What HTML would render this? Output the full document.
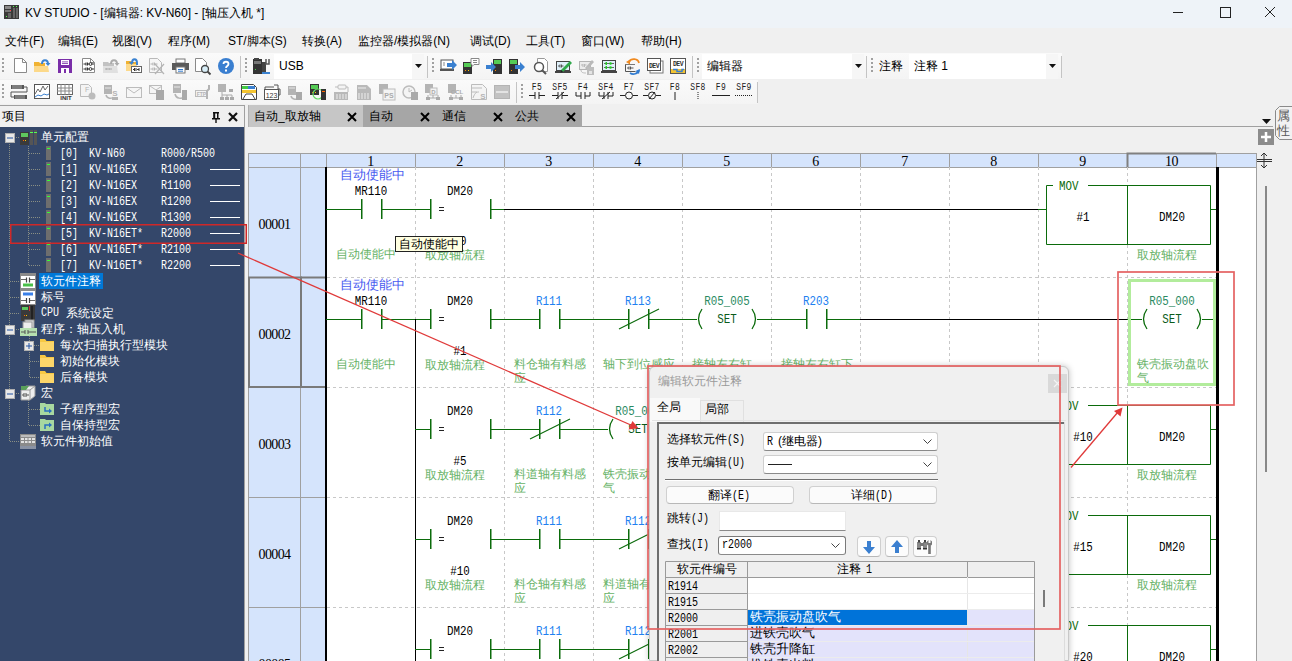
<!DOCTYPE html><html><head><meta charset="utf-8"><style>
html,body{margin:0;padding:0;}
body{width:1292px;height:661px;overflow:hidden;position:relative;background:#f0f0f0;font-family:"Liberation Sans",sans-serif;}
body div{position:absolute;white-space:pre;line-height:1;}
svg{position:absolute;overflow:visible;}
.tm{font-family:"Liberation Mono",monospace;font-size:10px;color:#fff;transform:scale(1,1.3);transform-origin:0 0;}
.lm{font-family:"Liberation Mono",monospace;font-size:10.83px;color:#000;transform:scale(1,1.25);transform-origin:0 0;}
.lc{font-family:"Liberation Sans",sans-serif;font-size:12px;}
.rn{font-family:"Liberation Serif",serif;font-size:14px;letter-spacing:-0.6px;color:#000;}
.dm{font-family:"Liberation Mono",monospace;font-size:10px;color:#000;transform:scale(1,1.3);transform-origin:0 0;}
</style></head><body>
<div style="left:0px;top:0px;width:1292px;height:28px;background:#eef3f8;"></div>
<svg style="left:4px;top:5px" width="16" height="15" viewBox="0 0 16 15">
<rect x="0" y="0" width="15" height="14" fill="#3a3a3a"/>
<rect x="1" y="1" width="6" height="3" fill="#8a8a8a"/><rect x="9" y="1" width="1" height="1" fill="#5f5"/><rect x="12" y="1" width="1" height="1" fill="#5f5"/>
<rect x="1" y="5" width="6" height="2" fill="#777"/><rect x="6" y="5" width="1" height="1" fill="#f44"/>
<rect x="9" y="3" width="2" height="10" fill="#666"/><rect x="12" y="3" width="2" height="10" fill="#666"/>
<rect x="2" y="11" width="1" height="1" fill="#5f5"/><rect x="4" y="8" width="3" height="5" fill="#666"/>
</svg>
<div style="left:25px;top:7px;font-size:12px;color:#000;font-family:'Liberation Sans', sans-serif;">KV STUDIO - [编辑器: KV-N60] - [轴压入机 *]</div>
<svg style="left:1165px;top:5px" width="120" height="16" viewBox="0 0 120 16">
<line x1="8" y1="7.5" x2="18" y2="7.5" stroke="#222" stroke-width="1"/>
<rect x="55.5" y="2.5" width="10" height="10" fill="none" stroke="#222" stroke-width="1"/>
<line x1="100" y1="2" x2="110" y2="12" stroke="#222" stroke-width="1"/><line x1="110" y1="2" x2="100" y2="12" stroke="#222" stroke-width="1"/>
</svg>
<div style="left:5px;top:35px;font-size:12px;color:#000;font-family:'Liberation Sans', sans-serif;">文件(F)</div>
<div style="left:58px;top:35px;font-size:12px;color:#000;font-family:'Liberation Sans', sans-serif;">编辑(E)</div>
<div style="left:112px;top:35px;font-size:12px;color:#000;font-family:'Liberation Sans', sans-serif;">视图(V)</div>
<div style="left:168px;top:35px;font-size:12px;color:#000;font-family:'Liberation Sans', sans-serif;">程序(M)</div>
<div style="left:228px;top:35px;font-size:12px;color:#000;font-family:'Liberation Sans', sans-serif;">ST/脚本(S)</div>
<div style="left:302px;top:35px;font-size:12px;color:#000;font-family:'Liberation Sans', sans-serif;">转换(A)</div>
<div style="left:358px;top:35px;font-size:12px;color:#000;font-family:'Liberation Sans', sans-serif;">监控器/模拟器(N)</div>
<div style="left:470px;top:35px;font-size:12px;color:#000;font-family:'Liberation Sans', sans-serif;">调试(D)</div>
<div style="left:526px;top:35px;font-size:12px;color:#000;font-family:'Liberation Sans', sans-serif;">工具(T)</div>
<div style="left:581px;top:35px;font-size:12px;color:#000;font-family:'Liberation Sans', sans-serif;">窗口(W)</div>
<div style="left:641px;top:35px;font-size:12px;color:#000;font-family:'Liberation Sans', sans-serif;">帮助(H)</div>
<div style="left:0px;top:53px;width:1062px;height:26px;background:linear-gradient(#fafafa,#f4f4f4);"></div>
<div style="left:0px;top:80px;width:517px;height:24px;background:linear-gradient(#fafafa,#f4f4f4);"></div>
<div style="left:517px;top:80px;width:241px;height:24px;background:linear-gradient(#fafafa,#f4f4f4);"></div>
<div style="left:0px;top:105px;width:245px;height:1px;background:#a0a0a0;"></div>
<div style="left:244px;top:105px;width:1px;height:556px;background:#a0a0a0;"></div>
<div style="left:2px;top:58px;width:2px;height:2px;background:#a0a0a0;"></div>
<div style="left:2px;top:62px;width:2px;height:2px;background:#a0a0a0;"></div>
<div style="left:2px;top:66px;width:2px;height:2px;background:#a0a0a0;"></div>
<div style="left:2px;top:70px;width:2px;height:2px;background:#a0a0a0;"></div>
<div style="left:245px;top:58px;width:2px;height:2px;background:#a0a0a0;"></div>
<div style="left:245px;top:62px;width:2px;height:2px;background:#a0a0a0;"></div>
<div style="left:245px;top:66px;width:2px;height:2px;background:#a0a0a0;"></div>
<div style="left:245px;top:70px;width:2px;height:2px;background:#a0a0a0;"></div>
<div style="left:432px;top:58px;width:2px;height:2px;background:#a0a0a0;"></div>
<div style="left:432px;top:62px;width:2px;height:2px;background:#a0a0a0;"></div>
<div style="left:432px;top:66px;width:2px;height:2px;background:#a0a0a0;"></div>
<div style="left:432px;top:70px;width:2px;height:2px;background:#a0a0a0;"></div>
<div style="left:697px;top:58px;width:2px;height:2px;background:#a0a0a0;"></div>
<div style="left:697px;top:62px;width:2px;height:2px;background:#a0a0a0;"></div>
<div style="left:697px;top:66px;width:2px;height:2px;background:#a0a0a0;"></div>
<div style="left:697px;top:70px;width:2px;height:2px;background:#a0a0a0;"></div>
<div style="left:871px;top:58px;width:2px;height:2px;background:#a0a0a0;"></div>
<div style="left:871px;top:62px;width:2px;height:2px;background:#a0a0a0;"></div>
<div style="left:871px;top:66px;width:2px;height:2px;background:#a0a0a0;"></div>
<div style="left:871px;top:70px;width:2px;height:2px;background:#a0a0a0;"></div>
<div style="left:240px;top:56px;width:1px;height:22px;background:#c4c4c4;"></div>
<div style="left:427px;top:56px;width:1px;height:22px;background:#c4c4c4;"></div>
<div style="left:692px;top:56px;width:1px;height:22px;background:#c4c4c4;"></div>
<div style="left:866px;top:56px;width:1px;height:22px;background:#c4c4c4;"></div>
<div style="left:1061px;top:56px;width:1px;height:22px;background:#c4c4c4;"></div>
<div style="left:2px;top:84px;width:2px;height:2px;background:#a0a0a0;"></div>
<div style="left:2px;top:88px;width:2px;height:2px;background:#a0a0a0;"></div>
<div style="left:2px;top:92px;width:2px;height:2px;background:#a0a0a0;"></div>
<div style="left:2px;top:96px;width:2px;height:2px;background:#a0a0a0;"></div>
<div style="left:521px;top:84px;width:2px;height:2px;background:#a0a0a0;"></div>
<div style="left:521px;top:88px;width:2px;height:2px;background:#a0a0a0;"></div>
<div style="left:521px;top:92px;width:2px;height:2px;background:#a0a0a0;"></div>
<div style="left:521px;top:96px;width:2px;height:2px;background:#a0a0a0;"></div>
<div style="left:516px;top:82px;width:1px;height:21px;background:#c4c4c4;"></div>
<div style="left:757px;top:82px;width:1px;height:21px;background:#c4c4c4;"></div>
<svg style="left:13px;top:58px" width="17" height="17" viewBox="0 0 17 17"><path d="M1.5 0.5h8l4 4v10h-12z" fill="#fff" stroke="#8a8a8a"/><path d="M9.5 0.5v4h4" fill="none" stroke="#8a8a8a"/></svg>
<svg style="left:34px;top:58px" width="17" height="17" viewBox="0 0 17 17"><path d="M0 4h5l1 1h5v9H0z" fill="#f0b232"/><path d="M0 8h14l1 6H0z" fill="#fcd98a"/><path d="M8 6c0-5 6-5 6 0" fill="none" stroke="#3b82d0" stroke-width="2"/><path d="M11.5 5h5l-2.5 3z" fill="#3b82d0"/></svg>
<svg style="left:58px;top:58px" width="17" height="17" viewBox="0 0 17 17"><rect x="0" y="1" width="14" height="14" fill="#7a2ea8"/><rect x="3" y="2" width="8" height="5" fill="#fff"/><rect x="4" y="3.5" width="6" height="0.8" fill="#7a2ea8"/><rect x="4" y="5" width="6" height="0.8" fill="#7a2ea8"/><rect x="3" y="10" width="8" height="5" fill="#fff"/><rect x="6" y="11" width="2" height="4" fill="#7a2ea8"/></svg>
<svg style="left:82px;top:58px" width="17" height="17" viewBox="0 0 17 17"><path d="M0.5 0.5h8l4 4v10h-12z" fill="#fff" stroke="#8a8a8a"/><path d="M8.5 0.5v4h4" fill="none" stroke="#8a8a8a"/><path d="M1.5 6h2.5M4 4.5v3M5.5 4.5v3M5.5 6h1.5M10 6h2M1.5 11h2.5M4 9.5v3M5.5 9.5v3M5.5 11h1.5M10 11h2" stroke="#333"/><circle cx="8.5" cy="6" r="1.4" fill="none" stroke="#333"/><circle cx="8.5" cy="11" r="1.4" fill="none" stroke="#333"/></svg>
<svg style="left:103px;top:58px" width="17" height="17" viewBox="0 0 17 17"><path d="M0 4h5l1 1h5v10H0z" fill="#c2c2c2"/><path d="M0 8h14l1 7H0z" fill="#e0e0e0"/><path d="M8 6c0-5 6-5 6 0" fill="none" stroke="#aaaaaa" stroke-width="2"/><path d="M11.5 5h5l-2.5 3z" fill="#aaaaaa"/><path d="M3 11h2M3 10v2M6 10v2M6 11h3" stroke="#aaa"/></svg>
<svg style="left:126px;top:58px" width="17" height="17" viewBox="0 0 17 17"><path d="M0 3h5l1 1h5v9H0z" fill="#f0b232"/><path d="M0 6h11v7H0z" fill="#fcd98a"/><path d="M6 5c0-5 5-5 5 0v2" fill="none" stroke="#3b82d0" stroke-width="2"/><path d="M3 4h5l-2.5 3z" fill="#3b82d0" transform="translate(0,0)"/><rect x="5.5" y="8.5" width="10" height="6" fill="#fff" stroke="#666"/><path d="M7 11.5h1.5M8.5 10v3M10 10v3M11 11.5h2M13 10v3" stroke="#333"/></svg>
<svg style="left:149px;top:58px" width="17" height="17" viewBox="0 0 17 17"><path d="M0.5 0.5h8l4 4v10h-12z" fill="#f6f6f6" stroke="#b9b9b9"/><path d="M1.5 6h2.5M4 4.5v3M5.5 4.5v3M5.5 6h3M1.5 11h2.5M4 9.5v3M5.5 9.5v3M5.5 11h3" stroke="#b4b4b4"/><path d="M6 6l9 10M15 6l-9 10" stroke="#b4b4b4" stroke-width="1.2"/></svg>
<svg style="left:172px;top:58px" width="17" height="17" viewBox="0 0 17 17"><rect x="4" y="1" width="9" height="4" fill="#fff" stroke="#777"/><rect x="0" y="5" width="17" height="7" fill="#5a5a5a"/><rect x="4" y="9" width="9" height="6" fill="#fff" stroke="#777"/><path d="M6 11.5h5M6 13.2h5" stroke="#2f7ad0"/></svg>
<svg style="left:195px;top:58px" width="17" height="17" viewBox="0 0 17 17"><path d="M0.5 0.5h7l4 4v9h-11z" fill="#fff" stroke="#8a8a8a"/><circle cx="10" cy="11" r="3.5" fill="#d8eef8" stroke="#444" stroke-width="1.3"/><path d="M12.5 13.5l3 3" stroke="#444" stroke-width="1.8"/></svg>
<svg style="left:218px;top:58px" width="17" height="17" viewBox="0 0 17 17"><circle cx="8" cy="8" r="8" fill="#3a7fd0"/><path d="M5.5 6c0-3 5-3 5 0c0 2-2.5 2-2.5 4" fill="none" stroke="#fff" stroke-width="1.8"/><rect x="7" y="11.5" width="2" height="2" fill="#fff"/></svg>
<svg style="left:253px;top:58px" width="17" height="17" viewBox="0 0 17 17"><rect x="0" y="1" width="9" height="15" fill="#333"/><rect x="1" y="3" width="7" height="3" fill="#777"/><rect x="1" y="0" width="5" height="2" fill="#444"/><rect x="2" y="11" width="1" height="1" fill="#4c4"/><rect x="9" y="4" width="4" height="12" fill="#444"/><path d="M13 1v5h3V1" fill="none" stroke="#555" stroke-width="1.5"/><rect x="9" y="14" width="8" height="2" fill="#3b82d0"/></svg>
<svg style="left:440px;top:58px" width="17" height="17" viewBox="0 0 17 17"><rect x="1" y="2" width="12" height="9" fill="#fff" stroke="#555"/><rect x="0" y="11" width="14" height="2" fill="#555"/><path d="M3 5h2M3 7h2" stroke="#888"/><path d="M7 5h5v-3l5 5-5 5v-3H7z" fill="#3a80d0"/></svg>
<svg style="left:463px;top:58px" width="17" height="17" viewBox="0 0 17 17"><rect x="0" y="4" width="9" height="12" fill="#333"/><rect x="1" y="5" width="7" height="4" fill="#5c5"/><rect x="2" y="12" width="1" height="1" fill="#f80"/><rect x="5" y="12" width="1" height="1" fill="#fc0"/><path d="M8 0.5h8v6h-5l-2 2v-2H8z" fill="#fff" stroke="#888"/><path d="M10 2.5h4M10 4.5h4" stroke="#888"/></svg>
<svg style="left:486px;top:58px" width="17" height="17" viewBox="0 0 17 17"><rect x="7" y="1" width="9" height="15" fill="#333"/><rect x="8" y="2" width="7" height="4" fill="#5c5"/><rect x="9" y="12" width="1" height="1" fill="#f80"/><path d="M0 7h5v-3l5 5-5 5v-3H0z" fill="#3a80d0"/></svg>
<svg style="left:509px;top:58px" width="17" height="17" viewBox="0 0 17 17"><rect x="0" y="1" width="9" height="15" fill="#333"/><rect x="1" y="2" width="7" height="4" fill="#5c5"/><rect x="2" y="12" width="1" height="1" fill="#f80"/><path d="M6 7h5v-3l5 5-5 5v-3H6z" fill="#3a80d0"/></svg>
<svg style="left:532px;top:58px" width="17" height="17" viewBox="0 0 17 17"><path d="M5.5 0.5h7l3 3v10h-10z" fill="#fff" stroke="#999"/><circle cx="7" cy="9" r="4.5" fill="#fff" stroke="#555" stroke-width="1.5"/><path d="M10 12l4 4" stroke="#555" stroke-width="2"/></svg>
<svg style="left:555px;top:58px" width="17" height="17" viewBox="0 0 17 17"><rect x="1.5" y="3.5" width="13" height="9" fill="#dff0fa" stroke="#444"/><rect x="0" y="13" width="16" height="2" fill="#444"/><path d="M3 8h2M5 6.5v3M6.5 6.5v3M6.5 8h2" stroke="#555"/><path d="M6 12l9-9 2 2-9 9z" fill="#2fa84a"/><path d="M6 12l-0.5 2.5 2.5-0.5z" fill="#222"/></svg>
<svg style="left:578px;top:58px" width="17" height="17" viewBox="0 0 17 17"><rect x="1.5" y="3.5" width="11" height="8" fill="#ececec" stroke="#b4b4b4"/><path d="M3 7h2M5 6v3M6.5 6v3M6.5 7h2" stroke="#b9b9b9"/><path d="M7 10l7-8 2 2-7 8z" fill="#b9b9b9"/><path d="M3 12c0 3 3 3 5 3" fill="none" stroke="#bcbcbc"/><rect x="9" y="9" width="7" height="8" fill="#bdbdbd"/><rect x="11" y="13" width="3" height="3" fill="#e4e4e4"/></svg>
<svg style="left:601px;top:58px" width="17" height="17" viewBox="0 0 17 17"><rect x="1.5" y="2.5" width="13" height="10" fill="#dff0fa" stroke="#444"/><rect x="0" y="13" width="16" height="2" fill="#444"/><path d="M3 5.5h10M3 9.5h10" stroke="#666"/><rect x="4.5" y="4" width="1.5" height="3" fill="#2c2"/><rect x="4.5" y="8" width="1.5" height="3" fill="#2c2"/><circle cx="9.5" cy="5.5" r="1.3" fill="#2c2"/><circle cx="9.5" cy="9.5" r="1.3" fill="#2c2"/></svg>
<svg style="left:624px;top:58px" width="17" height="17" viewBox="0 0 17 17"><path d="M1.5 6.5v7h10" fill="none" stroke="#555"/><path d="M3 10h2M5 8.5v3M6.5 8.5v3M6.5 10h3" stroke="#555"/><rect x="1" y="6" width="10" height="1" fill="#777"/><path d="M5 4c2-4 9-4 10 1" fill="none" stroke="#f08a20" stroke-width="1.8"/><path d="M2 4l4-2.5v5z" fill="#f08a20"/><path d="M6 15c3 2 8 1 9-3" fill="none" stroke="#2f7ad0" stroke-width="1.8"/><path d="M16 11l-1 5-3.5-3z" fill="#2f7ad0"/></svg>
<svg style="left:647px;top:58px" width="17" height="17" viewBox="0 0 17 17"><rect x="3" y="3" width="13" height="12" fill="#fff" stroke="#777"/><rect x="0.5" y="0.5" width="13" height="12" fill="#fff" stroke="#555"/><text x="7" y="9.5" font-size="6.5" font-family="Liberation Mono" font-weight="bold" text-anchor="middle" fill="#333" letter-spacing="-0.6">DEV</text></svg>
<svg style="left:670px;top:58px" width="17" height="17" viewBox="0 0 17 17"><rect x="0.5" y="0.5" width="15" height="15" fill="#fff" stroke="#555"/><text x="8" y="8" font-size="6.5" font-family="Liberation Mono" font-weight="bold" text-anchor="middle" fill="#333" letter-spacing="-0.6">DEV</text><rect x="1" y="11" width="14" height="4" fill="#f4c430"/><path d="M3 11.5h4v2h5v-2h2" fill="none" stroke="#3a80d0" stroke-width="1.5"/></svg>
<svg style="left:11px;top:84px" width="17" height="17" viewBox="0 0 17 17"><rect x="0" y="1" width="13" height="4" fill="#555"/><path d="M2 1v4M4 1v4M6 1v4M8 1v4M10 1v4" stroke="#ddd" stroke-width="0.6"/><rect x="3" y="11" width="13" height="4" fill="#555"/><path d="M5 11v4M7 11v4M9 11v4M11 11v4M13 11v4" stroke="#ddd" stroke-width="0.6"/><path d="M13 3h3v5H0v5h3" fill="none" stroke="#555"/></svg>
<svg style="left:34px;top:84px" width="17" height="17" viewBox="0 0 17 17"><rect x="0.5" y="0.5" width="15" height="14" fill="#fff" stroke="#555"/><path d="M1 10l3-5 2 3 3-6 2 4 3-4" fill="none" stroke="#666"/><path d="M1 13l3-2 3 1 3-2 3 1 2-1" fill="none" stroke="#3a80d0"/></svg>
<svg style="left:57px;top:84px" width="17" height="17" viewBox="0 0 17 17"><rect x="0.5" y="0.5" width="15" height="10" fill="#fff" stroke="#666"/><path d="M0 4h16M0 7h16M4 0v11M8 0v11M12 0v11" stroke="#888"/><text x="9" y="16" font-size="6" font-family="Liberation Sans" font-weight="bold" text-anchor="middle" fill="#333">INIT</text></svg>
<svg style="left:80px;top:84px" width="17" height="17" viewBox="0 0 17 17"><path d="M0.5 0.5h8l3 3v9h-11z" fill="#f4f4f4" stroke="#bcbcbc"/><text x="5" y="8" font-size="7" font-family="Liberation Sans" fill="#b4b4b4">F</text><circle cx="12" cy="12" r="3.5" fill="#bcbcbc"/></svg>
<svg style="left:103px;top:84px" width="17" height="17" viewBox="0 0 17 17"><rect x="1" y="1" width="8" height="9" fill="#b4b4b4"/><path d="M2 4h6" stroke="#e8e8e8"/><path d="M3 11c1 4 6 4 7 2" fill="none" stroke="#b4b4b4" stroke-width="1.5"/><text x="12" y="12" font-size="8" font-weight="bold" font-family="Liberation Sans" text-anchor="middle" fill="#b4b4b4">S</text><rect x="9" y="13" width="6" height="3" fill="#b4b4b4"/></svg>
<svg style="left:126px;top:84px" width="17" height="17" viewBox="0 0 17 17"><rect x="0.5" y="3.5" width="15" height="10" fill="#f6f6f6" stroke="#bcbcbc"/><path d="M1 4l7 5 7-5" fill="none" stroke="#bcbcbc"/></svg>
<svg style="left:149px;top:84px" width="17" height="17" viewBox="0 0 17 17"><rect x="0.5" y="1.5" width="12" height="8" fill="#f6f6f6" stroke="#bcbcbc"/><path d="M1 2l6 4 6-4" fill="none" stroke="#bcbcbc"/><rect x="7" y="6" width="8" height="10" fill="#a9a9a9"/></svg>
<svg style="left:172px;top:84px" width="17" height="17" viewBox="0 0 17 17"><rect x="1" y="0" width="8" height="9" fill="#b4b4b4"/><path d="M2 3h6" stroke="#e8e8e8"/><path d="M3 10c1 5 7 5 9 3" fill="none" stroke="#b4b4b4" stroke-width="1.5"/><rect x="10" y="6" width="5" height="10" fill="#a9a9a9"/></svg>
<svg style="left:195px;top:84px" width="17" height="17" viewBox="0 0 17 17"><rect x="0.5" y="6.5" width="12" height="6" fill="#f4f4f4" stroke="#bcbcbc"/><text x="6.5" y="11.5" font-size="5" font-weight="bold" font-family="Liberation Sans" text-anchor="middle" fill="#b4b4b4">FTP</text><path d="M14 1v4l-2 2v8" fill="none" stroke="#b4b4b4" stroke-width="2"/></svg>
<svg style="left:218px;top:84px" width="17" height="17" viewBox="0 0 17 17"><rect x="0" y="0" width="8" height="8" fill="#b4b4b4"/><path d="M4 8v3h10v3M4 11v3M9 11v3" fill="none" stroke="#aaa"/><rect x="2" y="13" width="4" height="3" fill="#aaa"/><rect x="7" y="13" width="4" height="3" fill="#aaa"/><rect x="12" y="13" width="4" height="3" fill="#aaa"/><rect x="11" y="5" width="4" height="3" fill="#aaa"/></svg>
<svg style="left:241px;top:84px" width="17" height="17" viewBox="0 0 17 17"><path d="M0.5 0.5h12l3 3v12h-15z" fill="#fff" stroke="#444"/><rect x="1" y="2" width="6" height="3" fill="#4c4"/><rect x="7" y="2" width="7" height="3" fill="#3a80d0"/><rect x="1" y="6" width="14" height="3" fill="#f4c430"/><path d="M2 15l3-5h6l3 5" fill="none" stroke="#444"/></svg>
<svg style="left:264px;top:84px" width="17" height="17" viewBox="0 0 17 17"><rect x="0.5" y="5.5" width="14" height="10" fill="#fff" stroke="#555"/><text x="7.5" y="13.5" font-size="7" font-family="Liberation Sans" text-anchor="middle" fill="#333">123</text><path d="M1 5V3h9M10 1h4v4h2v6h-1" fill="none" stroke="#555"/></svg>
<svg style="left:287px;top:84px" width="17" height="17" viewBox="0 0 17 17"><rect x="1" y="2" width="8" height="9" fill="#b4b4b4"/><path d="M2 4h6" stroke="#e8e8e8"/><path d="M4 12c1 4 6 4 8 2" fill="none" stroke="#b4b4b4" stroke-width="1.5"/><rect x="9" y="8" width="6" height="8" fill="#a9a9a9"/></svg>
<svg style="left:310px;top:84px" width="17" height="17" viewBox="0 0 17 17"><rect x="0" y="0" width="9" height="11" fill="#333"/><rect x="1" y="1" width="7" height="4" fill="#5c5"/><rect x="2" y="8" width="1" height="1" fill="#f60"/><rect x="5" y="8" width="1" height="1" fill="#fc0"/><circle cx="8" cy="10" r="5" fill="none" stroke="#6d6" stroke-width="1.2"/><rect x="11" y="5" width="5" height="11" fill="#333"/><rect x="12" y="7" width="3" height="1" fill="#f60"/></svg>
<svg style="left:333px;top:84px" width="17" height="17" viewBox="0 0 17 17"><rect x="5" y="1" width="8" height="4" rx="1" fill="#f4f4f4" stroke="#bcbcbc"/><path d="M2 3h3M13 3h2v5" fill="none" stroke="#bcbcbc"/><rect x="1" y="8" width="14" height="8" fill="#b9b9b9"/><path d="M4 10v5M7 10v5M10 10v5M13 10v5" stroke="#eee"/></svg>
<svg style="left:356px;top:84px" width="17" height="17" viewBox="0 0 17 17"><path d="M1 1h10l4 4v11H1z" fill="#b9b9b9"/><path d="M2 4h8M3 9v6M6 9v6M9 9v6M12 9v6" stroke="#eee"/></svg>
<svg style="left:379px;top:84px" width="17" height="17" viewBox="0 0 17 17"><rect x="0" y="0" width="9" height="10" fill="#b4b4b4"/><rect x="4" y="5" width="12" height="11" fill="#f4f4f4" stroke="#bcbcbc"/><text x="10" y="13.5" font-size="7" font-weight="bold" font-family="Liberation Sans" text-anchor="middle" fill="#aaaaaa">PS</text></svg>
<svg style="left:402px;top:84px" width="17" height="17" viewBox="0 0 17 17"><circle cx="7" cy="8" r="6" fill="#f4f4f4" stroke="#bcbcbc" stroke-width="1.5"/><path d="M7 4v4l3-2" fill="none" stroke="#bcbcbc"/><rect x="9" y="8" width="7" height="8" fill="#a9a9a9"/></svg>
<svg style="left:425px;top:84px" width="17" height="17" viewBox="0 0 17 17"><rect x="0" y="0" width="8" height="9" fill="#b4b4b4"/><rect x="5" y="4" width="7" height="7" fill="#f4f4f4" stroke="#bcbcbc"/><text x="8.5" y="10" font-size="6" font-weight="bold" font-family="Liberation Sans" text-anchor="middle" fill="#aaaaaa">D</text><path d="M3 11v3h10v-3M8 11v3" fill="none" stroke="#aaa"/><rect x="1" y="13" width="4" height="3" fill="#aaa"/><rect x="11" y="13" width="4" height="3" fill="#aaa"/></svg>
<svg style="left:448px;top:84px" width="17" height="17" viewBox="0 0 17 17"><rect x="0" y="0" width="8" height="9" fill="#b4b4b4"/><text x="9" y="10" font-size="6" font-weight="bold" font-family="Liberation Sans" text-anchor="middle" fill="#aaaaaa">CCL</text><path d="M3 11v3h10v-3M8 11v3" fill="none" stroke="#aaa"/><rect x="1" y="13" width="4" height="3" fill="#aaa"/><rect x="11" y="13" width="4" height="3" fill="#aaa"/></svg>
<svg style="left:471px;top:84px" width="17" height="17" viewBox="0 0 17 17"><path d="M0.5 0.5h11l4 4v11h-15z" fill="#f4f4f4" stroke="#bcbcbc"/><path d="M1 4h10M1 8h5" stroke="#bcbcbc"/><path d="M2 14c2-6 4-6 6-6" fill="none" stroke="#bcbcbc"/><text x="12" y="15" font-size="8" font-weight="bold" font-family="Liberation Sans" text-anchor="middle" fill="#b4b4b4">S</text></svg>
<svg style="left:494px;top:84px" width="17" height="17" viewBox="0 0 17 17"><rect x="0.5" y="1.5" width="15" height="13" fill="#c2c2c2" stroke="#b4b4b4"/><path d="M2 8h12" stroke="#eee" stroke-width="1.5"/></svg>
<div style="left:274px;top:54px;width:150px;height:25px;background:#fff;"></div>
<div style="left:412px;top:54px;width:12px;height:25px;background:#f6f6f6;"></div>
<div style="left:279px;top:60px;font-size:12px;color:#000;font-family:'Liberation Sans', sans-serif;">USB</div>
<svg style="left:415px;top:64px" width="7" height="4" viewBox="0 0 7 4"><path d="M0 0h7l-3.5 4z" fill="#111"/></svg>
<div style="left:702px;top:54px;width:162px;height:25px;background:#fff;"></div>
<div style="left:852px;top:54px;width:12px;height:25px;background:#f6f6f6;"></div>
<div style="left:707px;top:60px;font-size:12px;color:#000;font-family:'Liberation Sans', sans-serif;">编辑器</div>
<svg style="left:855px;top:64px" width="7" height="4" viewBox="0 0 7 4"><path d="M0 0h7l-3.5 4z" fill="#111"/></svg>
<div style="left:879px;top:60px;font-size:12px;color:#000;font-family:'Liberation Sans', sans-serif;">注释</div>
<div style="left:909px;top:54px;width:149px;height:25px;background:#fff;"></div>
<div style="left:1046px;top:54px;width:12px;height:25px;background:#f6f6f6;"></div>
<div style="left:914px;top:60px;font-size:12px;color:#000;font-family:'Liberation Sans', sans-serif;">注释 1</div>
<svg style="left:1049px;top:64px" width="7" height="4" viewBox="0 0 7 4"><path d="M0 0h7l-3.5 4z" fill="#111"/></svg>
<div style="left:517px;top:82px;width:40px;text-align:center;font-family:'Liberation Mono', monospace;font-size:8px;letter-spacing:0.4px;color:#222;transform:scale(1,1.3);transform-origin:0 0">F5</div>
<svg style="left:527px;top:90px" width="20" height="10" viewBox="0 0 20 10"><path d="M2 5.5h6M8 2v7M12 2v7M12 5.5h6" stroke="#222" stroke-width="1" fill="none"/></svg>
<div style="left:540px;top:82px;width:40px;text-align:center;font-family:'Liberation Mono', monospace;font-size:8px;letter-spacing:0.4px;color:#222;transform:scale(1,1.3);transform-origin:0 0">SF5</div>
<svg style="left:550px;top:90px" width="20" height="10" viewBox="0 0 20 10"><path d="M2 5.5h6M8 2v7M12 2v7M12 5.5h6M6 9l8-7" stroke="#222" stroke-width="1" fill="none"/></svg>
<div style="left:563px;top:82px;width:40px;text-align:center;font-family:'Liberation Mono', monospace;font-size:8px;letter-spacing:0.4px;color:#222;transform:scale(1,1.3);transform-origin:0 0">F4</div>
<svg style="left:573px;top:90px" width="20" height="10" viewBox="0 0 20 10"><path d="M3 2v4h5M8 2v7M12 2v7M12 6h5v-4" stroke="#222" stroke-width="1" fill="none"/></svg>
<div style="left:586px;top:82px;width:40px;text-align:center;font-family:'Liberation Mono', monospace;font-size:8px;letter-spacing:0.4px;color:#222;transform:scale(1,1.3);transform-origin:0 0">SF4</div>
<svg style="left:596px;top:90px" width="20" height="10" viewBox="0 0 20 10"><path d="M3 2v4h5M8 2v7M12 2v7M12 6h5v-4M6 9l8-7" stroke="#222" stroke-width="1" fill="none"/></svg>
<div style="left:609px;top:82px;width:40px;text-align:center;font-family:'Liberation Mono', monospace;font-size:8px;letter-spacing:0.4px;color:#222;transform:scale(1,1.3);transform-origin:0 0">F7</div>
<svg style="left:619px;top:90px" width="20" height="10" viewBox="0 0 20 10"><path d="M1 5.5h5M14 5.5h5" stroke="#222" stroke-width="1" fill="none"/><circle cx="10" cy="5.5" r="3.5" stroke="#222" stroke-width="1" fill="none"/></svg>
<div style="left:632px;top:82px;width:40px;text-align:center;font-family:'Liberation Mono', monospace;font-size:8px;letter-spacing:0.4px;color:#222;transform:scale(1,1.3);transform-origin:0 0">SF7</div>
<svg style="left:642px;top:90px" width="20" height="10" viewBox="0 0 20 10"><path d="M1 5.5h5M14 5.5h5M7 9l6-7" stroke="#222" stroke-width="1" fill="none"/><circle cx="10" cy="5.5" r="3.5" stroke="#222" stroke-width="1" fill="none"/></svg>
<div style="left:655px;top:82px;width:40px;text-align:center;font-family:'Liberation Mono', monospace;font-size:8px;letter-spacing:0.4px;color:#222;transform:scale(1,1.3);transform-origin:0 0">F8</div>
<svg style="left:665px;top:90px" width="20" height="10" viewBox="0 0 20 10"><path d="M10 2v8" stroke="#222" stroke-width="1" fill="none"/></svg>
<div style="left:678px;top:82px;width:40px;text-align:center;font-family:'Liberation Mono', monospace;font-size:8px;letter-spacing:0.4px;color:#222;transform:scale(1,1.3);transform-origin:0 0">SF8</div>
<svg style="left:688px;top:90px" width="20" height="10" viewBox="0 0 20 10"><path d="M10 2v8" stroke="#222" stroke-dasharray="1 1" fill="none"/></svg>
<div style="left:701px;top:82px;width:40px;text-align:center;font-family:'Liberation Mono', monospace;font-size:8px;letter-spacing:0.4px;color:#222;transform:scale(1,1.3);transform-origin:0 0">F9</div>
<svg style="left:711px;top:90px" width="20" height="10" viewBox="0 0 20 10"><path d="M1 5.5h18" stroke="#222" stroke-width="1" fill="none"/></svg>
<div style="left:724px;top:82px;width:40px;text-align:center;font-family:'Liberation Mono', monospace;font-size:8px;letter-spacing:0.4px;color:#222;transform:scale(1,1.3);transform-origin:0 0">SF9</div>
<svg style="left:734px;top:90px" width="20" height="10" viewBox="0 0 20 10"><path d="M1 5.5h18" stroke="#222" stroke-dasharray="1 1" fill="none"/></svg>
<div style="left:0px;top:106px;width:244px;height:21px;background:#f0f0f0;"></div>
<div style="left:2px;top:110px;font-size:12px;color:#000;font-family:'Liberation Sans', sans-serif;">项目</div>
<svg style="left:212px;top:112px" width="8" height="11" viewBox="0 0 8 11"><rect x="1" y="0" width="6" height="1.5" fill="#111"/><rect x="1.2" y="0" width="2" height="6.5" fill="#111"/><rect x="5" y="0" width="1.5" height="6.5" fill="#111"/><rect x="0" y="6" width="8" height="1.5" fill="#111"/><rect x="3.3" y="7" width="1.4" height="4" fill="#111"/></svg>
<svg style="left:228px;top:112px" width="10" height="10" viewBox="0 0 10 10"><path d="M1 1l8 8M9 1l-8 8" stroke="#111" stroke-width="2.2"/></svg>
<div style="left:0px;top:127px;width:244px;height:534px;background:#34476a;"></div>
<div style="left:245px;top:105px;width:3px;height:556px;background:#f0f0f0;"></div>
<svg style="left:9px;top:142px" width="1" height="300"><line x1="0.5" y1="0" x2="0.5" y2="300" stroke="#8a8f84" stroke-dasharray="1 1"/></svg>
<svg style="left:28px;top:142px" width="1" height="124"><line x1="0.5" y1="0" x2="0.5" y2="124" stroke="#8a8f84" stroke-dasharray="1 1"/></svg>
<svg style="left:29px;top:153px" width="11" height="1"><line x1="0" y1="0.5" x2="11" y2="0.5" stroke="#8a8f84" stroke-dasharray="1 1"/></svg>
<svg style="left:29px;top:169px" width="11" height="1"><line x1="0" y1="0.5" x2="11" y2="0.5" stroke="#8a8f84" stroke-dasharray="1 1"/></svg>
<svg style="left:29px;top:185px" width="11" height="1"><line x1="0" y1="0.5" x2="11" y2="0.5" stroke="#8a8f84" stroke-dasharray="1 1"/></svg>
<svg style="left:29px;top:201px" width="11" height="1"><line x1="0" y1="0.5" x2="11" y2="0.5" stroke="#8a8f84" stroke-dasharray="1 1"/></svg>
<svg style="left:29px;top:217px" width="11" height="1"><line x1="0" y1="0.5" x2="11" y2="0.5" stroke="#8a8f84" stroke-dasharray="1 1"/></svg>
<svg style="left:29px;top:233px" width="11" height="1"><line x1="0" y1="0.5" x2="11" y2="0.5" stroke="#8a8f84" stroke-dasharray="1 1"/></svg>
<svg style="left:29px;top:249px" width="11" height="1"><line x1="0" y1="0.5" x2="11" y2="0.5" stroke="#8a8f84" stroke-dasharray="1 1"/></svg>
<svg style="left:29px;top:265px" width="11" height="1"><line x1="0" y1="0.5" x2="11" y2="0.5" stroke="#8a8f84" stroke-dasharray="1 1"/></svg>
<svg style="left:10px;top:281px" width="10" height="1"><line x1="0" y1="0.5" x2="10" y2="0.5" stroke="#8a8f84" stroke-dasharray="1 1"/></svg>
<svg style="left:10px;top:297px" width="10" height="1"><line x1="0" y1="0.5" x2="10" y2="0.5" stroke="#8a8f84" stroke-dasharray="1 1"/></svg>
<svg style="left:10px;top:313px" width="10" height="1"><line x1="0" y1="0.5" x2="10" y2="0.5" stroke="#8a8f84" stroke-dasharray="1 1"/></svg>
<svg style="left:10px;top:441px" width="10" height="1"><line x1="0" y1="0.5" x2="10" y2="0.5" stroke="#8a8f84" stroke-dasharray="1 1"/></svg>
<svg style="left:29px;top:334px" width="1" height="44"><line x1="0.5" y1="0" x2="0.5" y2="44" stroke="#8a8f84" stroke-dasharray="1 1"/></svg>
<svg style="left:30px;top:345px" width="10" height="1"><line x1="0" y1="0.5" x2="10" y2="0.5" stroke="#8a8f84" stroke-dasharray="1 1"/></svg>
<svg style="left:30px;top:361px" width="10" height="1"><line x1="0" y1="0.5" x2="10" y2="0.5" stroke="#8a8f84" stroke-dasharray="1 1"/></svg>
<svg style="left:30px;top:377px" width="10" height="1"><line x1="0" y1="0.5" x2="10" y2="0.5" stroke="#8a8f84" stroke-dasharray="1 1"/></svg>
<svg style="left:28px;top:398px" width="1" height="28"><line x1="0.5" y1="0" x2="0.5" y2="28" stroke="#8a8f84" stroke-dasharray="1 1"/></svg>
<svg style="left:29px;top:409px" width="11" height="1"><line x1="0" y1="0.5" x2="11" y2="0.5" stroke="#8a8f84" stroke-dasharray="1 1"/></svg>
<svg style="left:29px;top:425px" width="11" height="1"><line x1="0" y1="0.5" x2="11" y2="0.5" stroke="#8a8f84" stroke-dasharray="1 1"/></svg>
<svg style="left:10px;top:137px" width="10" height="1"><line x1="0" y1="0.5" x2="10" y2="0.5" stroke="#8a8f84" stroke-dasharray="1 1"/></svg>
<svg style="left:10px;top:329px" width="10" height="1"><line x1="0" y1="0.5" x2="10" y2="0.5" stroke="#8a8f84" stroke-dasharray="1 1"/></svg>
<svg style="left:10px;top:393px" width="10" height="1"><line x1="0" y1="0.5" x2="10" y2="0.5" stroke="#8a8f84" stroke-dasharray="1 1"/></svg>
<svg style="left:5px;top:133px" width="10" height="10" viewBox="0 0 10 10"><rect x="0.5" y="0.5" width="9" height="9" fill="#e8e8e8" stroke="#b0b0b0"/><path d="M2 5h6" stroke="#2050a0"/></svg>
<svg style="left:5px;top:325px" width="10" height="10" viewBox="0 0 10 10"><rect x="0.5" y="0.5" width="9" height="9" fill="#e8e8e8" stroke="#b0b0b0"/><path d="M2 5h6" stroke="#2050a0"/></svg>
<svg style="left:24px;top:341px" width="10" height="10" viewBox="0 0 10 10"><rect x="0.5" y="0.5" width="9" height="9" fill="#e8e8e8" stroke="#b0b0b0"/><path d="M2 5h6" stroke="#2050a0"/><path d="M5 2v6" stroke="#2050a0"/></svg>
<svg style="left:5px;top:389px" width="10" height="10" viewBox="0 0 10 10"><rect x="0.5" y="0.5" width="9" height="9" fill="#e8e8e8" stroke="#b0b0b0"/><path d="M2 5h6" stroke="#2050a0"/></svg>
<svg style="left:20px;top:130px" width="17" height="15" viewBox="0 0 17 15"><rect x="0" y="2" width="9" height="13" fill="#3a3a3a"/><rect x="1" y="3" width="7" height="4" fill="#5ec85e"/><rect x="3" y="10" width="1" height="1" fill="#f60"/><rect x="5" y="10" width="1" height="1" fill="#fc0"/><rect x="10" y="0" width="3" height="15" fill="#555"/><rect x="14" y="0" width="3" height="15" fill="#555"/><rect x="10" y="2" width="3" height="1" fill="#5f5"/><rect x="14" y="2" width="3" height="1" fill="#5f5"/></svg>
<div style="left:46px;top:146px;width:5px;height:14px;background:#6e6e6e;"></div>
<div style="left:47px;top:148px;width:3px;height:1px;background:#3f3;"></div>
<div class="tm" style="left:60px;top:148px">[0]</div>
<div class="tm" style="left:89px;top:148px">KV-N60</div>
<div class="tm" style="left:161px;top:148px">R000/R500</div>
<div style="left:46px;top:162px;width:5px;height:14px;background:#6e6e6e;"></div>
<div style="left:47px;top:164px;width:3px;height:1px;background:#3f3;"></div>
<div class="tm" style="left:60px;top:164px">[1]</div>
<div class="tm" style="left:89px;top:164px">KV-N16EX</div>
<div class="tm" style="left:161px;top:164px">R1000</div>
<div style="left:210px;top:169px;width:30px;height:1px;background:#fff;"></div>
<div style="left:46px;top:178px;width:5px;height:14px;background:#6e6e6e;"></div>
<div style="left:47px;top:180px;width:3px;height:1px;background:#3f3;"></div>
<div class="tm" style="left:60px;top:180px">[2]</div>
<div class="tm" style="left:89px;top:180px">KV-N16EX</div>
<div class="tm" style="left:161px;top:180px">R1100</div>
<div style="left:210px;top:185px;width:30px;height:1px;background:#fff;"></div>
<div style="left:46px;top:194px;width:5px;height:14px;background:#6e6e6e;"></div>
<div style="left:47px;top:196px;width:3px;height:1px;background:#3f3;"></div>
<div class="tm" style="left:60px;top:196px">[3]</div>
<div class="tm" style="left:89px;top:196px">KV-N16EX</div>
<div class="tm" style="left:161px;top:196px">R1200</div>
<div style="left:210px;top:201px;width:30px;height:1px;background:#fff;"></div>
<div style="left:46px;top:210px;width:5px;height:14px;background:#6e6e6e;"></div>
<div style="left:47px;top:212px;width:3px;height:1px;background:#3f3;"></div>
<div class="tm" style="left:60px;top:212px">[4]</div>
<div class="tm" style="left:89px;top:212px">KV-N16EX</div>
<div class="tm" style="left:161px;top:212px">R1300</div>
<div style="left:210px;top:217px;width:30px;height:1px;background:#fff;"></div>
<div style="left:46px;top:226px;width:5px;height:14px;background:#6e6e6e;"></div>
<div style="left:47px;top:228px;width:3px;height:1px;background:#3f3;"></div>
<div class="tm" style="left:60px;top:228px">[5]</div>
<div class="tm" style="left:89px;top:228px">KV-N16ET*</div>
<div class="tm" style="left:161px;top:228px">R2000</div>
<div style="left:210px;top:233px;width:30px;height:1px;background:#fff;"></div>
<div style="left:46px;top:242px;width:5px;height:14px;background:#6e6e6e;"></div>
<div style="left:47px;top:244px;width:3px;height:1px;background:#3f3;"></div>
<div class="tm" style="left:60px;top:244px">[6]</div>
<div class="tm" style="left:89px;top:244px">KV-N16ET*</div>
<div class="tm" style="left:161px;top:244px">R2100</div>
<div style="left:210px;top:249px;width:30px;height:1px;background:#fff;"></div>
<div style="left:46px;top:258px;width:5px;height:14px;background:#6e6e6e;"></div>
<div style="left:47px;top:260px;width:3px;height:1px;background:#3f3;"></div>
<div class="tm" style="left:60px;top:260px">[7]</div>
<div class="tm" style="left:89px;top:260px">KV-N16ET*</div>
<div class="tm" style="left:161px;top:260px">R2200</div>
<div style="left:210px;top:265px;width:30px;height:1px;background:#fff;"></div>
<div style="left:41px;top:131px;font-size:12px;color:#fff;font-family:'Liberation Sans', sans-serif;">单元配置</div>
<div style="left:39px;top:273px;width:64px;height:16px;background:#0078d7;"></div>
<div style="left:41px;top:275px;font-size:12px;color:#fff;font-family:'Liberation Sans', sans-serif;">软元件注释</div>
<svg style="left:20px;top:273px" width="16" height="16" viewBox="0 0 16 16"><rect x="0" y="0" width="16" height="16" fill="#8a8a8a"/><rect x="1" y="3" width="14" height="12" fill="#fff"/><path d="M1 6.5h5.5M9.5 6.5H15" stroke="#666"/><path d="M6.5 4.5v5M9.5 4.5v5" stroke="#444" stroke-width="1.2"/><rect x="3" y="10.5" width="10" height="3" fill="#49c049"/></svg>
<div style="left:41px;top:291px;font-size:12px;color:#fff;font-family:'Liberation Sans', sans-serif;">标号</div>
<svg style="left:20px;top:289px" width="16" height="16" viewBox="0 0 16 16"><rect x="0" y="0" width="16" height="16" fill="#8a8a8a"/><rect x="1" y="2" width="14" height="13" fill="#fff"/><rect x="3" y="3.5" width="10" height="3" fill="#3a80e8"/><path d="M1 11.5h5.5M9.5 11.5H15" stroke="#666"/><path d="M6.5 9v5M9.5 9v5" stroke="#444" stroke-width="1.2"/></svg>
<div class="tm" style="left:41px;top:307px">CPU</div>
<div style="left:66px;top:307px;font-size:12px;color:#fff;font-family:'Liberation Sans', sans-serif;">系统设定</div>
<svg style="left:21px;top:305px" width="14" height="16" viewBox="0 0 14 16"><rect x="0" y="0" width="14" height="16" fill="#3a3a3a"/><rect x="1" y="2" width="6" height="3" fill="#5ec85e"/><rect x="8" y="1" width="1" height="5" fill="#c33"/><rect x="10" y="1" width="2" height="14" fill="#222"/><rect x="3" y="10" width="1" height="1" fill="#f60"/><rect x="5" y="10" width="1" height="1" fill="#fc0"/></svg>
<div style="left:41px;top:323px;font-size:12px;color:#fff;font-family:'Liberation Sans', sans-serif;">程序：轴压入机</div>
<svg style="left:20px;top:320px" width="17" height="16" viewBox="0 0 17 16"><rect x="5" y="0" width="9" height="8" fill="#ddd" stroke="#999"/><rect x="3" y="2" width="9" height="8" fill="#eee" stroke="#999"/><rect x="0" y="8" width="17" height="8" fill="#b6e0b0"/><path d="M1 12h4M5 10v4M8 10v4M8 12h8" stroke="#555"/></svg>
<svg style="left:40px;top:338px" width="14" height="13" viewBox="0 0 14 13"><path d="M0 1h5l1.5 2H14v10H0z" fill="#f7c843"/><path d="M0 4h14v9H0z" fill="#fcd66a"/></svg>
<div style="left:60px;top:339px;font-size:12px;color:#fff;font-family:'Liberation Sans', sans-serif;">每次扫描执行型模块</div>
<svg style="left:40px;top:354px" width="14" height="13" viewBox="0 0 14 13"><path d="M0 1h5l1.5 2H14v10H0z" fill="#f7c843"/><path d="M0 4h14v9H0z" fill="#fcd66a"/></svg>
<div style="left:60px;top:355px;font-size:12px;color:#fff;font-family:'Liberation Sans', sans-serif;">初始化模块</div>
<svg style="left:40px;top:370px" width="14" height="13" viewBox="0 0 14 13"><path d="M0 1h5l1.5 2H14v10H0z" fill="#f7c843"/><path d="M0 4h14v9H0z" fill="#fcd66a"/></svg>
<div style="left:60px;top:371px;font-size:12px;color:#fff;font-family:'Liberation Sans', sans-serif;">后备模块</div>
<div style="left:41px;top:387px;font-size:12px;color:#fff;font-family:'Liberation Sans', sans-serif;">宏</div>
<svg style="left:20px;top:385px" width="16" height="16" viewBox="0 0 16 16"><path d="M1 5l5-4h9v10l-5 4H1z" fill="#eee" stroke="#999"/><path d="M1 5h9v10M10 5l5-4" fill="none" stroke="#999"/><path d="M1 1h8l-3 4H1z" fill="#5aa05a"/><path d="M2 10h2M4 8v4M6 8v4M6 10h3" stroke="#555"/></svg>
<svg style="left:40px;top:401px" width="14" height="15" viewBox="0 0 14 15"><path d="M0 2h5l1 1h8v11H0z" fill="#a8d8a0"/><path d="M5 6v4h5" fill="none" stroke="#2a6fc0" stroke-width="1.5"/><path d="M9 7.5l3 2.5-3 2.5z" fill="#2a6fc0"/></svg>
<div style="left:60px;top:403px;font-size:12px;color:#fff;font-family:'Liberation Sans', sans-serif;">子程序型宏</div>
<svg style="left:40px;top:417px" width="14" height="15" viewBox="0 0 14 15"><path d="M0 2h5l1 1h8v11H0z" fill="#a8d8a0"/><path d="M5 12V8h5" fill="none" stroke="#2a6fc0" stroke-width="1.5"/><path d="M9 5.5l3 2.5-3 2.5z" fill="#2a6fc0"/></svg>
<div style="left:60px;top:419px;font-size:12px;color:#fff;font-family:'Liberation Sans', sans-serif;">自保持型宏</div>
<div style="left:41px;top:435px;font-size:12px;color:#fff;font-family:'Liberation Sans', sans-serif;">软元件初始值</div>
<svg style="left:20px;top:434px" width="16" height="15" viewBox="0 0 16 15"><rect x="0" y="0" width="16" height="12" fill="#8a8a8a"/><rect x="1" y="1" width="14" height="2" fill="#bbb"/><path d="M1 5h14M1 8h14" stroke="#fff" stroke-width="1.6"/><path d="M4.5 4v8M8 4v8M11.5 4v8" stroke="#8a8a8a"/><path d="M1 12v3M3 12v3M5 12v3M7 12v3M9 12v3M11 12v3M13 12v3M15 12v3" stroke="#ddd"/></svg>
<div style="left:248px;top:105px;width:115px;height:22px;background:#c6c6c6;border-left:1px solid #b0b0b0;box-sizing:border-box;"></div>
<div style="left:363px;top:105px;width:219px;height:22px;background:#a6a6a6;"></div>
<div style="left:582px;top:126px;width:691px;height:1px;background:#a0a0a0;"></div>
<div style="left:254px;top:110px;font-size:12px;color:#000;font-family:'Liberation Sans', sans-serif;">自动_取放轴</div>
<svg style="left:347px;top:112px" width="10" height="10" viewBox="0 0 10 10"><path d="M1 1l8 8M9 1l-8 8" stroke="#000" stroke-width="2"/></svg>
<div style="left:369px;top:110px;font-size:12px;color:#000;font-family:'Liberation Sans', sans-serif;">自动</div>
<svg style="left:420px;top:112px" width="10" height="10" viewBox="0 0 10 10"><path d="M1 1l8 8M9 1l-8 8" stroke="#000" stroke-width="2"/></svg>
<div style="left:442px;top:110px;font-size:12px;color:#000;font-family:'Liberation Sans', sans-serif;">通信</div>
<svg style="left:493px;top:112px" width="10" height="10" viewBox="0 0 10 10"><path d="M1 1l8 8M9 1l-8 8" stroke="#000" stroke-width="2"/></svg>
<div style="left:515px;top:110px;font-size:12px;color:#000;font-family:'Liberation Sans', sans-serif;">公共</div>
<svg style="left:566px;top:112px" width="10" height="10" viewBox="0 0 10 10"><path d="M1 1l8 8M9 1l-8 8" stroke="#000" stroke-width="2"/></svg>
<svg style="left:1262px;top:119px" width="9" height="5" viewBox="0 0 9 5"><path d="M0 0h9l-4.5 5z" fill="#111"/></svg>
<div style="left:1258px;top:129px;width:16px;height:16px;background:#8c8c8c;"></div>
<svg style="left:1258px;top:129px" width="16" height="16" viewBox="0 0 16 16"><path d="M8 3v10M3 8h10" stroke="#fff" stroke-width="2.5"/></svg>
<svg style="left:1274px;top:106px" width="18" height="34" viewBox="0 0 18 34"><path d="M18 0.5H5.5l-4 4v25l4 4H18" fill="#f2f2f2" stroke="#8a8a8a"/></svg>
<div style="left:1277px;top:108px;font-size:13px;color:#5a5a5a;line-height:15px;white-space:normal;width:14px">属<br>性</div>
<svg style="left:1256px;top:153px" width="16" height="15" viewBox="0 0 16 15"><path d="M8 0v15M5 3l3-3 3 3M5 12l3 3 3-3" fill="none" stroke="#333"/><path d="M0 6.5h16M0 8.5h16" stroke="#333"/></svg>
<div style="left:1265px;top:186px;width:2px;height:286px;background:#888;"></div>
<div style="left:248px;top:153px;width:1008px;height:508px;background:#fff;"></div>
<div style="left:248px;top:153px;width:1008px;height:14px;background:#d5e4fc;"></div>
<div style="left:248px;top:167px;width:78px;height:494px;background:#d5e4fc;"></div>
<div class="lc" style="left:340px;top:168px;color:#4a5cf0;font-size:13px">自动使能中</div>
<div class="lm" style="left:331px;top:185px;width:80px;text-align:center;color:#000">MR110</div>
<div class="lc" style="left:336px;top:248px;color:#66b266;font-size:12px">自动使能中</div>
<div class="lm" style="left:420px;top:185px;width:80px;text-align:center;color:#000">DM20</div>
<div class="lm" style="left:420px;top:235px;width:80px;text-align:center;color:#000">#0</div>
<div class="lc" style="left:425px;top:249px;color:#66b266;font-size:12px">取放轴流程</div>
<div class="lm" style="left:1059px;top:180px;color:#0b6b0b">MOV</div>
<div class="lm" style="left:1043px;top:211px;width:80px;text-align:center;color:#000">#1</div>
<div class="lm" style="left:1132px;top:211px;width:80px;text-align:center;color:#000">DM20</div>
<div class="lc" style="left:1137px;top:249px;color:#66b266;font-size:12px">取放轴流程</div>
<div class="lc" style="left:340px;top:278px;color:#4a5cf0;font-size:13px">自动使能中</div>
<div class="lm" style="left:331px;top:295px;width:80px;text-align:center;color:#000">MR110</div>
<div class="lc" style="left:336px;top:358px;color:#66b266;font-size:12px">自动使能中</div>
<div class="lm" style="left:420px;top:295px;width:80px;text-align:center;color:#000">DM20</div>
<div class="lm" style="left:420px;top:345px;width:80px;text-align:center;color:#000">#1</div>
<div class="lc" style="left:425px;top:359px;color:#66b266;font-size:12px">取放轴流程</div>
<div class="lm" style="left:509px;top:295px;width:80px;text-align:center;color:#2080f0">R111</div>
<div class="lc" style="left:514px;top:358px;color:#66b266;font-size:12px">料仓轴有料感</div>
<div class="lc" style="left:514px;top:372px;color:#66b266;font-size:12px">应</div>
<div class="lm" style="left:598px;top:295px;width:80px;text-align:center;color:#2080f0">R113</div>
<div class="lc" style="left:603px;top:358px;color:#66b266;font-size:12px">轴下到位感应</div>
<div class="lm" style="left:687px;top:295px;width:80px;text-align:center;color:#2a8a62">R05_005</div>
<div class="lm" style="left:687px;top:313px;width:80px;text-align:center;color:#0b5b1b">SET</div>
<div class="lc" style="left:692px;top:358px;color:#66b266;font-size:12px">接轴左右缸</div>
<div class="lm" style="left:776px;top:295px;width:80px;text-align:center;color:#2080f0">R203</div>
<div class="lc" style="left:781px;top:358px;color:#66b266;font-size:12px">接轴左右缸下</div>
<div class="lm" style="left:1132px;top:295px;width:80px;text-align:center;color:#2a8a62">R05_000</div>
<div class="lm" style="left:1132px;top:313px;width:80px;text-align:center;color:#0b5b1b">SET</div>
<div class="lc" style="left:1137px;top:358px;color:#66b266;font-size:12px">铁壳振动盘吹</div>
<div class="lc" style="left:1137px;top:372px;color:#66b266;font-size:12px">气</div>
<div class="lm" style="left:420px;top:405px;width:80px;text-align:center;color:#000">DM20</div>
<div class="lm" style="left:420px;top:455px;width:80px;text-align:center;color:#000">#5</div>
<div class="lc" style="left:425px;top:469px;color:#66b266;font-size:12px">取放轴流程</div>
<div class="lm" style="left:509px;top:405px;width:80px;text-align:center;color:#2080f0">R112</div>
<div class="lc" style="left:514px;top:468px;color:#66b266;font-size:12px">料道轴有料感</div>
<div class="lc" style="left:514px;top:482px;color:#66b266;font-size:12px">应</div>
<div class="lm" style="left:598px;top:405px;width:80px;text-align:center;color:#2a8a62">R05_001</div>
<div class="lm" style="left:598px;top:423px;width:80px;text-align:center;color:#0b5b1b">SET</div>
<div class="lc" style="left:603px;top:468px;color:#66b266;font-size:12px">铁壳振动盘吹</div>
<div class="lc" style="left:603px;top:482px;color:#66b266;font-size:12px">气</div>
<div class="lm" style="left:1059px;top:400px;color:#0b6b0b">MOV</div>
<div class="lm" style="left:1043px;top:431px;width:80px;text-align:center;color:#000">#10</div>
<div class="lm" style="left:1132px;top:431px;width:80px;text-align:center;color:#000">DM20</div>
<div class="lc" style="left:1137px;top:469px;color:#66b266;font-size:12px">取放轴流程</div>
<div class="lm" style="left:420px;top:515px;width:80px;text-align:center;color:#000">DM20</div>
<div class="lm" style="left:420px;top:565px;width:80px;text-align:center;color:#000">#10</div>
<div class="lc" style="left:425px;top:579px;color:#66b266;font-size:12px">取放轴流程</div>
<div class="lm" style="left:509px;top:515px;width:80px;text-align:center;color:#2080f0">R111</div>
<div class="lc" style="left:514px;top:578px;color:#66b266;font-size:12px">料仓轴有料感</div>
<div class="lc" style="left:514px;top:592px;color:#66b266;font-size:12px">应</div>
<div class="lm" style="left:598px;top:515px;width:80px;text-align:center;color:#2080f0">R112</div>
<div class="lc" style="left:603px;top:578px;color:#66b266;font-size:12px">料道轴有料感</div>
<div class="lc" style="left:603px;top:592px;color:#66b266;font-size:12px">应</div>
<div class="lm" style="left:1059px;top:510px;color:#0b6b0b">MOV</div>
<div class="lm" style="left:1043px;top:541px;width:80px;text-align:center;color:#000">#15</div>
<div class="lm" style="left:1132px;top:541px;width:80px;text-align:center;color:#000">DM20</div>
<div class="lc" style="left:1137px;top:579px;color:#66b266;font-size:12px">取放轴流程</div>
<div class="lm" style="left:420px;top:625px;width:80px;text-align:center;color:#000">DM20</div>
<div class="lm" style="left:420px;top:675px;width:80px;text-align:center;color:#000">#15</div>
<div class="lc" style="left:425px;top:689px;color:#66b266;font-size:12px">取放轴流程</div>
<div class="lm" style="left:509px;top:625px;width:80px;text-align:center;color:#2080f0">R111</div>
<div class="lc" style="left:514px;top:688px;color:#66b266;font-size:12px">料仓轴有料感</div>
<div class="lc" style="left:514px;top:702px;color:#66b266;font-size:12px">应</div>
<div class="lm" style="left:598px;top:625px;width:80px;text-align:center;color:#2080f0">R112</div>
<div class="lc" style="left:603px;top:688px;color:#66b266;font-size:12px">料道轴有料感</div>
<div class="lc" style="left:603px;top:702px;color:#66b266;font-size:12px">应</div>
<div class="lm" style="left:1059px;top:620px;color:#0b6b0b">MOV</div>
<div class="lm" style="left:1043px;top:651px;width:80px;text-align:center;color:#000">#20</div>
<div class="lm" style="left:1132px;top:651px;width:80px;text-align:center;color:#000">DM20</div>
<div class="lc" style="left:1137px;top:689px;color:#66b266;font-size:12px">取放轴流程</div>
<svg style="left:0;top:0" width="1292" height="661" viewBox="0 0 1292 661"><line x1="248" y1="153.5" x2="1256" y2="153.5" stroke="#a0a0a0" stroke-width="1"/><line x1="248" y1="167.5" x2="1256" y2="167.5" stroke="#a0a0a0" stroke-width="1"/><line x1="248.5" y1="153" x2="248.5" y2="167" stroke="#a0a0a0" stroke-width="1"/><line x1="300.5" y1="153" x2="300.5" y2="167" stroke="#a0a0a0" stroke-width="1"/><line x1="326.5" y1="153" x2="326.5" y2="167" stroke="#a0a0a0" stroke-width="1"/><line x1="415.5" y1="153" x2="415.5" y2="167" stroke="#a0a0a0" stroke-width="1"/><line x1="504.5" y1="153" x2="504.5" y2="167" stroke="#a0a0a0" stroke-width="1"/><line x1="593.5" y1="153" x2="593.5" y2="167" stroke="#a0a0a0" stroke-width="1"/><line x1="682.5" y1="153" x2="682.5" y2="167" stroke="#a0a0a0" stroke-width="1"/><line x1="771.5" y1="153" x2="771.5" y2="167" stroke="#a0a0a0" stroke-width="1"/><line x1="860.5" y1="153" x2="860.5" y2="167" stroke="#a0a0a0" stroke-width="1"/><line x1="949.5" y1="153" x2="949.5" y2="167" stroke="#a0a0a0" stroke-width="1"/><line x1="1038.5" y1="153" x2="1038.5" y2="167" stroke="#a0a0a0" stroke-width="1"/><line x1="1127.5" y1="153" x2="1127.5" y2="167" stroke="#a0a0a0" stroke-width="1"/><line x1="1216.5" y1="153" x2="1216.5" y2="167" stroke="#a0a0a0" stroke-width="1"/><line x1="1256.5" y1="153" x2="1256.5" y2="167" stroke="#a0a0a0" stroke-width="1"/><line x1="248.5" y1="167" x2="248.5" y2="661" stroke="#a0a0a0" stroke-width="1"/><line x1="300.5" y1="167" x2="300.5" y2="661" stroke="#a0a0a0" stroke-width="1"/><line x1="1256.5" y1="153" x2="1256.5" y2="661" stroke="#a0a0a0" stroke-width="1"/><line x1="248" y1="277.5" x2="326" y2="277.5" stroke="#a0a0a0" stroke-width="1"/><line x1="248" y1="387.5" x2="326" y2="387.5" stroke="#a0a0a0" stroke-width="1"/><line x1="248" y1="497.5" x2="326" y2="497.5" stroke="#a0a0a0" stroke-width="1"/><line x1="248" y1="607.5" x2="326" y2="607.5" stroke="#a0a0a0" stroke-width="1"/><path d="M1127.5 168V153.5H1216" fill="none" stroke="#808080" stroke-width="2"/><rect x="249" y="277.5" width="52" height="109.5" fill="none" stroke="#7a7a7a" stroke-width="2"/><path d="M301 277.5H326M301 387H326" fill="none" stroke="#7a7a7a" stroke-width="2"/><line x1="415.5" y1="167" x2="415.5" y2="661" stroke="#c8c8c8" stroke-width="1" stroke-dasharray="3 3"/><line x1="504.5" y1="167" x2="504.5" y2="661" stroke="#c8c8c8" stroke-width="1" stroke-dasharray="3 3"/><line x1="593.5" y1="167" x2="593.5" y2="661" stroke="#c8c8c8" stroke-width="1" stroke-dasharray="3 3"/><line x1="682.5" y1="167" x2="682.5" y2="661" stroke="#c8c8c8" stroke-width="1" stroke-dasharray="3 3"/><line x1="771.5" y1="167" x2="771.5" y2="661" stroke="#c8c8c8" stroke-width="1" stroke-dasharray="3 3"/><line x1="860.5" y1="167" x2="860.5" y2="661" stroke="#c8c8c8" stroke-width="1" stroke-dasharray="3 3"/><line x1="949.5" y1="167" x2="949.5" y2="661" stroke="#c8c8c8" stroke-width="1" stroke-dasharray="3 3"/><line x1="1038.5" y1="167" x2="1038.5" y2="661" stroke="#c8c8c8" stroke-width="1" stroke-dasharray="3 3"/><line x1="1127.5" y1="167" x2="1127.5" y2="661" stroke="#c8c8c8" stroke-width="1" stroke-dasharray="3 3"/><line x1="327" y1="277.5" x2="1216" y2="277.5" stroke="#c8c8c8" stroke-width="1" stroke-dasharray="3 3"/><line x1="327" y1="387.5" x2="1216" y2="387.5" stroke="#c8c8c8" stroke-width="1" stroke-dasharray="3 3"/><line x1="327" y1="497.5" x2="1216" y2="497.5" stroke="#c8c8c8" stroke-width="1" stroke-dasharray="3 3"/><line x1="327" y1="607.5" x2="1216" y2="607.5" stroke="#c8c8c8" stroke-width="1" stroke-dasharray="3 3"/><rect x="325" y="167" width="2" height="494" fill="#000"/><rect x="1216" y="167" width="3" height="494" fill="#000"/><line x1="326" y1="209.5" x2="361" y2="209.5" stroke="#0b6b0b" stroke-width="1"/><line x1="381" y1="209.5" x2="415" y2="209.5" stroke="#0b6b0b" stroke-width="1"/><line x1="361.75" y1="199" x2="361.75" y2="219" stroke="#0b6b0b" stroke-width="1.5"/><line x1="381.75" y1="199" x2="381.75" y2="219" stroke="#0b6b0b" stroke-width="1.5"/><line x1="415" y1="209.5" x2="430" y2="209.5" stroke="#0b6b0b" stroke-width="1"/><line x1="490" y1="209.5" x2="504" y2="209.5" stroke="#0b6b0b" stroke-width="1"/><line x1="430.75" y1="199" x2="430.75" y2="219" stroke="#0b6b0b" stroke-width="1.5"/><line x1="490.75" y1="199" x2="490.75" y2="219" stroke="#0b6b0b" stroke-width="1.5"/><line x1="439" y1="207.5" x2="444" y2="207.5" stroke="#222" stroke-width="1"/><line x1="439" y1="210.5" x2="444" y2="210.5" stroke="#222" stroke-width="1"/><line x1="504" y1="209.5" x2="1038" y2="209.5" stroke="#000" stroke-width="1"/><line x1="1038" y1="209.5" x2="1046" y2="209.5" stroke="#0b6b0b" stroke-width="1"/><line x1="1210" y1="209.5" x2="1216" y2="209.5" stroke="#0b6b0b" stroke-width="1"/><path d="M1053 185.5H1046.5V244.5H1210.5V185.5H1088" fill="none" stroke="#0b6b0b"/><line x1="1127.5" y1="185" x2="1127.5" y2="244" stroke="#0b6b0b" stroke-width="1"/><line x1="326" y1="319.5" x2="361" y2="319.5" stroke="#0b6b0b" stroke-width="1"/><line x1="381" y1="319.5" x2="415" y2="319.5" stroke="#0b6b0b" stroke-width="1"/><line x1="361.75" y1="309" x2="361.75" y2="329" stroke="#0b6b0b" stroke-width="1.5"/><line x1="381.75" y1="309" x2="381.75" y2="329" stroke="#0b6b0b" stroke-width="1.5"/><line x1="415" y1="319.5" x2="430" y2="319.5" stroke="#0b6b0b" stroke-width="1"/><line x1="490" y1="319.5" x2="504" y2="319.5" stroke="#0b6b0b" stroke-width="1"/><line x1="430.75" y1="309" x2="430.75" y2="329" stroke="#0b6b0b" stroke-width="1.5"/><line x1="490.75" y1="309" x2="490.75" y2="329" stroke="#0b6b0b" stroke-width="1.5"/><line x1="439" y1="317.5" x2="444" y2="317.5" stroke="#222" stroke-width="1"/><line x1="439" y1="320.5" x2="444" y2="320.5" stroke="#222" stroke-width="1"/><line x1="504" y1="319.5" x2="539" y2="319.5" stroke="#0b6b0b" stroke-width="1"/><line x1="559" y1="319.5" x2="593" y2="319.5" stroke="#0b6b0b" stroke-width="1"/><line x1="539.75" y1="309" x2="539.75" y2="329" stroke="#0b6b0b" stroke-width="1.5"/><line x1="559.75" y1="309" x2="559.75" y2="329" stroke="#0b6b0b" stroke-width="1.5"/><line x1="593" y1="319.5" x2="628" y2="319.5" stroke="#0b6b0b" stroke-width="1"/><line x1="648" y1="319.5" x2="682" y2="319.5" stroke="#0b6b0b" stroke-width="1"/><line x1="628.75" y1="309" x2="628.75" y2="329" stroke="#0b6b0b" stroke-width="1.5"/><line x1="648.75" y1="309" x2="648.75" y2="329" stroke="#0b6b0b" stroke-width="1.5"/><line x1="619" y1="329" x2="659" y2="309" stroke="#0b6b0b" stroke-width="1.2"/><line x1="682" y1="319.5" x2="697" y2="319.5" stroke="#0b6b0b" stroke-width="1"/><line x1="757" y1="319.5" x2="771" y2="319.5" stroke="#0b6b0b" stroke-width="1"/><path d="M702 309Q695 319 702 329" fill="none" stroke="#0b6b0b" stroke-width="1.3"/><path d="M752 309Q759 319 752 329" fill="none" stroke="#0b6b0b" stroke-width="1.3"/><line x1="771" y1="319.5" x2="806" y2="319.5" stroke="#0b6b0b" stroke-width="1"/><line x1="826" y1="319.5" x2="860" y2="319.5" stroke="#0b6b0b" stroke-width="1"/><line x1="806.75" y1="309" x2="806.75" y2="329" stroke="#0b6b0b" stroke-width="1.5"/><line x1="826.75" y1="309" x2="826.75" y2="329" stroke="#0b6b0b" stroke-width="1.5"/><line x1="860" y1="319.5" x2="1127" y2="319.5" stroke="#000" stroke-width="1"/><line x1="1127" y1="319.5" x2="1142" y2="319.5" stroke="#0b6b0b" stroke-width="1"/><line x1="1202" y1="319.5" x2="1216" y2="319.5" stroke="#0b6b0b" stroke-width="1"/><path d="M1147 309Q1140 319 1147 329" fill="none" stroke="#0b6b0b" stroke-width="1.3"/><path d="M1197 309Q1204 319 1197 329" fill="none" stroke="#0b6b0b" stroke-width="1.3"/><line x1="415.5" y1="319" x2="415.5" y2="661" stroke="#000" stroke-width="1"/><line x1="415" y1="429.5" x2="430" y2="429.5" stroke="#0b6b0b" stroke-width="1"/><line x1="490" y1="429.5" x2="504" y2="429.5" stroke="#0b6b0b" stroke-width="1"/><line x1="430.75" y1="419" x2="430.75" y2="439" stroke="#0b6b0b" stroke-width="1.5"/><line x1="490.75" y1="419" x2="490.75" y2="439" stroke="#0b6b0b" stroke-width="1.5"/><line x1="439" y1="427.5" x2="444" y2="427.5" stroke="#222" stroke-width="1"/><line x1="439" y1="430.5" x2="444" y2="430.5" stroke="#222" stroke-width="1"/><line x1="504" y1="429.5" x2="539" y2="429.5" stroke="#0b6b0b" stroke-width="1"/><line x1="559" y1="429.5" x2="593" y2="429.5" stroke="#0b6b0b" stroke-width="1"/><line x1="539.75" y1="419" x2="539.75" y2="439" stroke="#0b6b0b" stroke-width="1.5"/><line x1="559.75" y1="419" x2="559.75" y2="439" stroke="#0b6b0b" stroke-width="1.5"/><line x1="530" y1="439" x2="570" y2="419" stroke="#0b6b0b" stroke-width="1.2"/><line x1="593" y1="429.5" x2="608" y2="429.5" stroke="#0b6b0b" stroke-width="1"/><line x1="668" y1="429.5" x2="682" y2="429.5" stroke="#0b6b0b" stroke-width="1"/><path d="M613 419Q606 429 613 439" fill="none" stroke="#0b6b0b" stroke-width="1.3"/><path d="M663 419Q670 429 663 439" fill="none" stroke="#0b6b0b" stroke-width="1.3"/><line x1="682" y1="429.5" x2="1038" y2="429.5" stroke="#000" stroke-width="1"/><line x1="1038" y1="429.5" x2="1046" y2="429.5" stroke="#0b6b0b" stroke-width="1"/><line x1="1210" y1="429.5" x2="1216" y2="429.5" stroke="#0b6b0b" stroke-width="1"/><path d="M1053 405.5H1046.5V464.5H1210.5V405.5H1088" fill="none" stroke="#0b6b0b"/><line x1="1127.5" y1="405" x2="1127.5" y2="464" stroke="#0b6b0b" stroke-width="1"/><line x1="415" y1="539.5" x2="430" y2="539.5" stroke="#0b6b0b" stroke-width="1"/><line x1="490" y1="539.5" x2="504" y2="539.5" stroke="#0b6b0b" stroke-width="1"/><line x1="430.75" y1="529" x2="430.75" y2="549" stroke="#0b6b0b" stroke-width="1.5"/><line x1="490.75" y1="529" x2="490.75" y2="549" stroke="#0b6b0b" stroke-width="1.5"/><line x1="439" y1="537.5" x2="444" y2="537.5" stroke="#222" stroke-width="1"/><line x1="439" y1="540.5" x2="444" y2="540.5" stroke="#222" stroke-width="1"/><line x1="504" y1="539.5" x2="539" y2="539.5" stroke="#0b6b0b" stroke-width="1"/><line x1="559" y1="539.5" x2="593" y2="539.5" stroke="#0b6b0b" stroke-width="1"/><line x1="539.75" y1="529" x2="539.75" y2="549" stroke="#0b6b0b" stroke-width="1.5"/><line x1="559.75" y1="529" x2="559.75" y2="549" stroke="#0b6b0b" stroke-width="1.5"/><line x1="593" y1="539.5" x2="628" y2="539.5" stroke="#0b6b0b" stroke-width="1"/><line x1="648" y1="539.5" x2="682" y2="539.5" stroke="#0b6b0b" stroke-width="1"/><line x1="628.75" y1="529" x2="628.75" y2="549" stroke="#0b6b0b" stroke-width="1.5"/><line x1="648.75" y1="529" x2="648.75" y2="549" stroke="#0b6b0b" stroke-width="1.5"/><line x1="619" y1="549" x2="659" y2="529" stroke="#0b6b0b" stroke-width="1.2"/><line x1="682" y1="539.5" x2="1038" y2="539.5" stroke="#000" stroke-width="1"/><line x1="1038" y1="539.5" x2="1046" y2="539.5" stroke="#0b6b0b" stroke-width="1"/><line x1="1210" y1="539.5" x2="1216" y2="539.5" stroke="#0b6b0b" stroke-width="1"/><path d="M1053 515.5H1046.5V574.5H1210.5V515.5H1088" fill="none" stroke="#0b6b0b"/><line x1="1127.5" y1="515" x2="1127.5" y2="574" stroke="#0b6b0b" stroke-width="1"/><line x1="415" y1="649.5" x2="430" y2="649.5" stroke="#0b6b0b" stroke-width="1"/><line x1="490" y1="649.5" x2="504" y2="649.5" stroke="#0b6b0b" stroke-width="1"/><line x1="430.75" y1="639" x2="430.75" y2="659" stroke="#0b6b0b" stroke-width="1.5"/><line x1="490.75" y1="639" x2="490.75" y2="659" stroke="#0b6b0b" stroke-width="1.5"/><line x1="439" y1="647.5" x2="444" y2="647.5" stroke="#222" stroke-width="1"/><line x1="439" y1="650.5" x2="444" y2="650.5" stroke="#222" stroke-width="1"/><line x1="504" y1="649.5" x2="539" y2="649.5" stroke="#0b6b0b" stroke-width="1"/><line x1="559" y1="649.5" x2="593" y2="649.5" stroke="#0b6b0b" stroke-width="1"/><line x1="539.75" y1="639" x2="539.75" y2="659" stroke="#0b6b0b" stroke-width="1.5"/><line x1="559.75" y1="639" x2="559.75" y2="659" stroke="#0b6b0b" stroke-width="1.5"/><line x1="593" y1="649.5" x2="628" y2="649.5" stroke="#0b6b0b" stroke-width="1"/><line x1="648" y1="649.5" x2="682" y2="649.5" stroke="#0b6b0b" stroke-width="1"/><line x1="628.75" y1="639" x2="628.75" y2="659" stroke="#0b6b0b" stroke-width="1.5"/><line x1="648.75" y1="639" x2="648.75" y2="659" stroke="#0b6b0b" stroke-width="1.5"/><line x1="619" y1="659" x2="659" y2="639" stroke="#0b6b0b" stroke-width="1.2"/><line x1="682" y1="649.5" x2="1038" y2="649.5" stroke="#000" stroke-width="1"/><line x1="1038" y1="649.5" x2="1046" y2="649.5" stroke="#0b6b0b" stroke-width="1"/><line x1="1210" y1="649.5" x2="1216" y2="649.5" stroke="#0b6b0b" stroke-width="1"/><path d="M1053 625.5H1046.5V684.5H1210.5V625.5H1088" fill="none" stroke="#0b6b0b"/><line x1="1127.5" y1="625" x2="1127.5" y2="684" stroke="#0b6b0b" stroke-width="1"/></svg>
<div class="rn" style="left:350.5px;top:155px;width:40px;text-align:center">1</div>
<div class="rn" style="left:439.5px;top:155px;width:40px;text-align:center">2</div>
<div class="rn" style="left:528.5px;top:155px;width:40px;text-align:center">3</div>
<div class="rn" style="left:617.5px;top:155px;width:40px;text-align:center">4</div>
<div class="rn" style="left:706.5px;top:155px;width:40px;text-align:center">5</div>
<div class="rn" style="left:795.5px;top:155px;width:40px;text-align:center">6</div>
<div class="rn" style="left:884.5px;top:155px;width:40px;text-align:center">7</div>
<div class="rn" style="left:973.5px;top:155px;width:40px;text-align:center">8</div>
<div class="rn" style="left:1062.5px;top:155px;width:40px;text-align:center">9</div>
<div class="rn" style="left:1151.5px;top:155px;width:40px;text-align:center">10</div>
<div class="rn" style="left:249px;top:218px;width:51px;text-align:center">00001</div>
<div class="rn" style="left:249px;top:328px;width:51px;text-align:center">00002</div>
<div class="rn" style="left:249px;top:438px;width:51px;text-align:center">00003</div>
<div class="rn" style="left:249px;top:548px;width:51px;text-align:center">00004</div>
<div class="rn" style="left:249px;top:658px;width:51px;text-align:center">00005</div>
<div style="left:1128px;top:279px;width:88px;height:107px;box-sizing:border-box;border:3px solid #b2ec9c;"></div>
<div style="left:395px;top:236px;width:68px;height:16px;box-sizing:border-box;background:#ffffe1;border:1px solid #222;"></div>
<div style="left:399px;top:238px;font-size:12px;color:#000;font-family:'Liberation Sans', sans-serif;">自动使能中</div>
<div style="left:649px;top:366px;width:420px;height:295px;box-sizing:border-box;background:#f0f0f0;border:1px solid #c8c8c8;border-radius:6px 6px 0 0;box-shadow:0 0 6px rgba(0,0,0,0.25);"></div>
<div style="left:658px;top:375px;font-size:12px;color:#9a9a9a;font-family:'Liberation Sans', sans-serif;">编辑软元件注释</div>
<div style="left:1048px;top:374px;width:19px;height:19px;background:#d9d9d9;"></div>
<svg style="left:1053px;top:379px" width="9" height="9" viewBox="0 0 9 9"><path d="M1 1l7 7M8 1l-7 7" stroke="#f4f4f4" stroke-width="1.2"/></svg>
<div style="left:650px;top:398px;width:50px;height:24px;background:#f9f9f9;"></div>
<div style="left:700px;top:400px;width:44px;height:22px;box-sizing:border-box;background:#f0f0f0;border:1px solid #e0e0e0;border-bottom:none;"></div>
<div style="left:657px;top:401px;font-size:12px;color:#000;font-family:'Liberation Sans', sans-serif;">全局</div>
<div style="left:705px;top:403px;font-size:12px;color:#000;font-family:'Liberation Sans', sans-serif;">局部</div>
<div style="left:657px;top:422px;width:408px;height:239px;box-sizing:border-box;background:#f0f0f0;border-top:2px solid #6e6e6e;border-left:2px solid #6e6e6e;"></div>
<div style="left:652px;top:420px;width:414px;height:1px;background:#e4e4e4;"></div>
<div style="left:1064px;top:422px;width:1px;height:239px;background:#dcdcdc;"></div>
<div style="left:667px;top:433px;font-size:12px;color:#000;font-family:'Liberation Sans', sans-serif;">选择软元件</div>
<div class="dm" style="left:727px;top:434px">(S)</div>
<div style="left:667px;top:456px;font-size:12px;color:#000;font-family:'Liberation Sans', sans-serif;">按单元编辑</div>
<div class="dm" style="left:727px;top:457px">(U)</div>
<div style="left:763px;top:432px;width:175px;height:19px;box-sizing:border-box;background:#fff;border:1px solid #cfcfcf;border-radius:3px;border-bottom-color:#8a8a8a;"></div>
<svg style="left:923px;top:439px" width="9" height="5" viewBox="0 0 9 5"><path d="M0.5 0.5l4 4 4-4" fill="none" stroke="#444"/></svg>
<div class="dm" style="left:767px;top:436px">R</div>
<div style="left:778px;top:435px;font-size:12px;color:#000;font-family:'Liberation Sans', sans-serif;">(继电器)</div>
<div style="left:763px;top:455px;width:175px;height:19px;box-sizing:border-box;background:#fff;border:1px solid #cfcfcf;border-radius:3px;border-bottom-color:#8a8a8a;"></div>
<svg style="left:923px;top:462px" width="9" height="5" viewBox="0 0 9 5"><path d="M0.5 0.5l4 4 4-4" fill="none" stroke="#444"/></svg>
<div style="left:768px;top:464px;width:24px;height:1px;background:#222;"></div>
<div style="left:665px;top:479px;width:273px;height:1px;background:#707070;"></div>
<div style="left:665px;top:480px;width:273px;height:1px;background:#fff;"></div>
<div style="left:666px;top:486px;width:128px;height:18px;box-sizing:border-box;background:#fbfbfb;border:1px solid #d0d0d0;border-radius:4px;border-bottom-color:#b8b8b8;"></div>
<div style="left:708px;top:489px;font-size:12px;color:#000;font-family:'Liberation Sans', sans-serif;">翻译</div>
<div class="dm" style="left:732px;top:490px">(E)</div>
<div style="left:809px;top:486px;width:128px;height:18px;box-sizing:border-box;background:#fbfbfb;border:1px solid #d0d0d0;border-radius:4px;border-bottom-color:#b8b8b8;"></div>
<div style="left:851px;top:489px;font-size:12px;color:#000;font-family:'Liberation Sans', sans-serif;">详细</div>
<div class="dm" style="left:875px;top:490px">(D)</div>
<div style="left:667px;top:512px;font-size:12px;color:#000;font-family:'Liberation Sans', sans-serif;">跳转</div>
<div class="dm" style="left:691px;top:513px">(J)</div>
<div style="left:719px;top:511px;width:127px;height:20px;box-sizing:border-box;background:#fff;border:1px solid #e8e8e8;border-bottom:1px solid #8a8a8a;"></div>
<div style="left:667px;top:538px;font-size:12px;color:#000;font-family:'Liberation Sans', sans-serif;">查找</div>
<div class="dm" style="left:691px;top:539px">(I)</div>
<div style="left:718px;top:536px;width:128px;height:19px;box-sizing:border-box;background:#fff;border:1px solid #7a7a7a;border-radius:3px;border-bottom-color:#8a8a8a;"></div>
<svg style="left:831px;top:543px" width="9" height="5" viewBox="0 0 9 5"><path d="M0.5 0.5l4 4 4-4" fill="none" stroke="#444"/></svg>
<div class="dm" style="left:722px;top:539px">r2000</div>
<div style="left:857px;top:536px;width:24px;height:21px;box-sizing:border-box;background:#fcfcfc;border:1px solid #cfcfcf;border-radius:4px;border-bottom-color:#b8b8b8;"></div>
<svg style="left:857px;top:536px" width="24" height="21" viewBox="0 0 24 21"><path d="M10 5h4v6h4l-6 7-6-7h4z" fill="#3a7fd0"/></svg>
<div style="left:885px;top:536px;width:24px;height:21px;box-sizing:border-box;background:#fcfcfc;border:1px solid #cfcfcf;border-radius:4px;border-bottom-color:#b8b8b8;"></div>
<svg style="left:885px;top:536px" width="24" height="21" viewBox="0 0 24 21"><path d="M10 17h4v-6h4l-6-7-6 7h4z" fill="#3a7fd0"/></svg>
<div style="left:913px;top:536px;width:24px;height:21px;box-sizing:border-box;background:#fcfcfc;border:1px solid #cfcfcf;border-radius:4px;border-bottom-color:#b8b8b8;"></div>
<svg style="left:913px;top:536px" width="24" height="21" viewBox="0 0 24 21"><rect x="4" y="6" width="4" height="7" fill="#888"/><rect x="10" y="6" width="4" height="7" fill="#888"/><rect x="4" y="12" width="4" height="1.5" fill="#333"/><rect x="10" y="12" width="4" height="1.5" fill="#333"/><rect x="5" y="4" width="2" height="2.5" fill="#444"/><rect x="11" y="4" width="2" height="2.5" fill="#444"/><rect x="7" y="7" width="4" height="3" fill="#777"/><path d="M16 18V10.5l-2-2V5.5l1.5-1.5v3h2v-3l1.5 1.5v3l-2 2" fill="#777"/><rect x="15.2" y="10" width="2.6" height="8" fill="#777"/></svg>
<div style="left:665px;top:561px;width:370px;height:100px;background:#fff;"></div>
<div style="left:665px;top:561px;width:370px;height:16px;background:#efefef;"></div>
<div style="left:665px;top:577px;width:82px;height:84px;background:#efefef;"></div>
<div style="left:748px;top:609px;width:287px;height:52px;background:#e3e3fb;"></div>
<div style="left:748px;top:610px;width:219px;height:15px;background:#0073d9;"></div>
<svg style="left:0;top:0" width="1292" height="661" viewBox="0 0 1292 661"><path d="M665.5 661V561.5H1034.5V661" fill="none" stroke="#9a9a9a"/><line x1="665" y1="577.5" x2="1035" y2="577.5" stroke="#9a9a9a"/><line x1="747.5" y1="561" x2="747.5" y2="661" stroke="#9a9a9a"/><line x1="967.5" y1="561" x2="967.5" y2="577" stroke="#9a9a9a"/><line x1="967.5" y1="577" x2="967.5" y2="661" stroke="#e6e6e6"/><line x1="665" y1="593.5" x2="747" y2="593.5" stroke="#9a9a9a"/><line x1="748" y1="593.5" x2="1034" y2="593.5" stroke="#ececec"/><line x1="665" y1="609.5" x2="747" y2="609.5" stroke="#9a9a9a"/><line x1="748" y1="609.5" x2="1034" y2="609.5" stroke="#ececec"/><line x1="665" y1="625.5" x2="747" y2="625.5" stroke="#9a9a9a"/><line x1="748" y1="625.5" x2="1034" y2="625.5" stroke="#ececec"/><line x1="665" y1="641.5" x2="747" y2="641.5" stroke="#9a9a9a"/><line x1="748" y1="641.5" x2="1034" y2="641.5" stroke="#ececec"/><line x1="665" y1="657.5" x2="747" y2="657.5" stroke="#9a9a9a"/><line x1="748" y1="657.5" x2="1034" y2="657.5" stroke="#ececec"/></svg>
<div style="left:677px;top:563px;font-size:12px;color:#000;font-family:'Liberation Sans', sans-serif;">软元件编号</div>
<div style="left:837px;top:563px;font-size:12px;color:#000;font-family:'Liberation Sans', sans-serif;">注释</div>
<div class="dm" style="left:866px;top:564px">1</div>
<div class="dm" style="left:668px;top:581px">R1914</div>
<div class="dm" style="left:668px;top:597px">R1915</div>
<div class="dm" style="left:668px;top:613px">R2000</div>
<div style="left:750px;top:610px;font-size:13px;color:#fff;font-family:'Liberation Sans', sans-serif;">铁壳振动盘吹气</div>
<div class="dm" style="left:668px;top:629px">R2001</div>
<div style="left:750px;top:626px;font-size:13px;color:#000;font-family:'Liberation Sans', sans-serif;">进铁壳吹气</div>
<div class="dm" style="left:668px;top:645px">R2002</div>
<div style="left:750px;top:642px;font-size:13px;color:#000;font-family:'Liberation Sans', sans-serif;">铁壳升降缸</div>
<div class="dm" style="left:668px;top:661px">R2003</div>
<div style="left:750px;top:658px;font-size:13px;color:#000;font-family:'Liberation Sans', sans-serif;">推铁壳出料</div>
<div style="left:1043px;top:590px;width:2px;height:17px;background:#7a7a7a;"></div>
<svg style="left:0;top:0" width="1292" height="661" viewBox="0 0 1292 661"><rect x="10.75" y="224.75" width="235.5" height="18.5" fill="none" stroke="#d02828" stroke-width="1.5"/><rect x="648" y="366" width="412" height="263" fill="none" stroke="#e46262" stroke-width="1.7"/><rect x="1118" y="272" width="116" height="133" fill="none" stroke="#e46262" stroke-width="1.7"/><line x1="238" y1="253" x2="632" y2="425.5" stroke="#e03a3a" stroke-width="1.3"/><path d="M638.5 428.3L628.5 429.5L632.5 421z" fill="#e03a3a"/><line x1="1071" y1="467.5" x2="1118" y2="412" stroke="#e03a3a" stroke-width="1.3"/><path d="M1122.5 407.4L1120.5 416.5L1114 411z" fill="#e03a3a"/></svg>
</body></html>
